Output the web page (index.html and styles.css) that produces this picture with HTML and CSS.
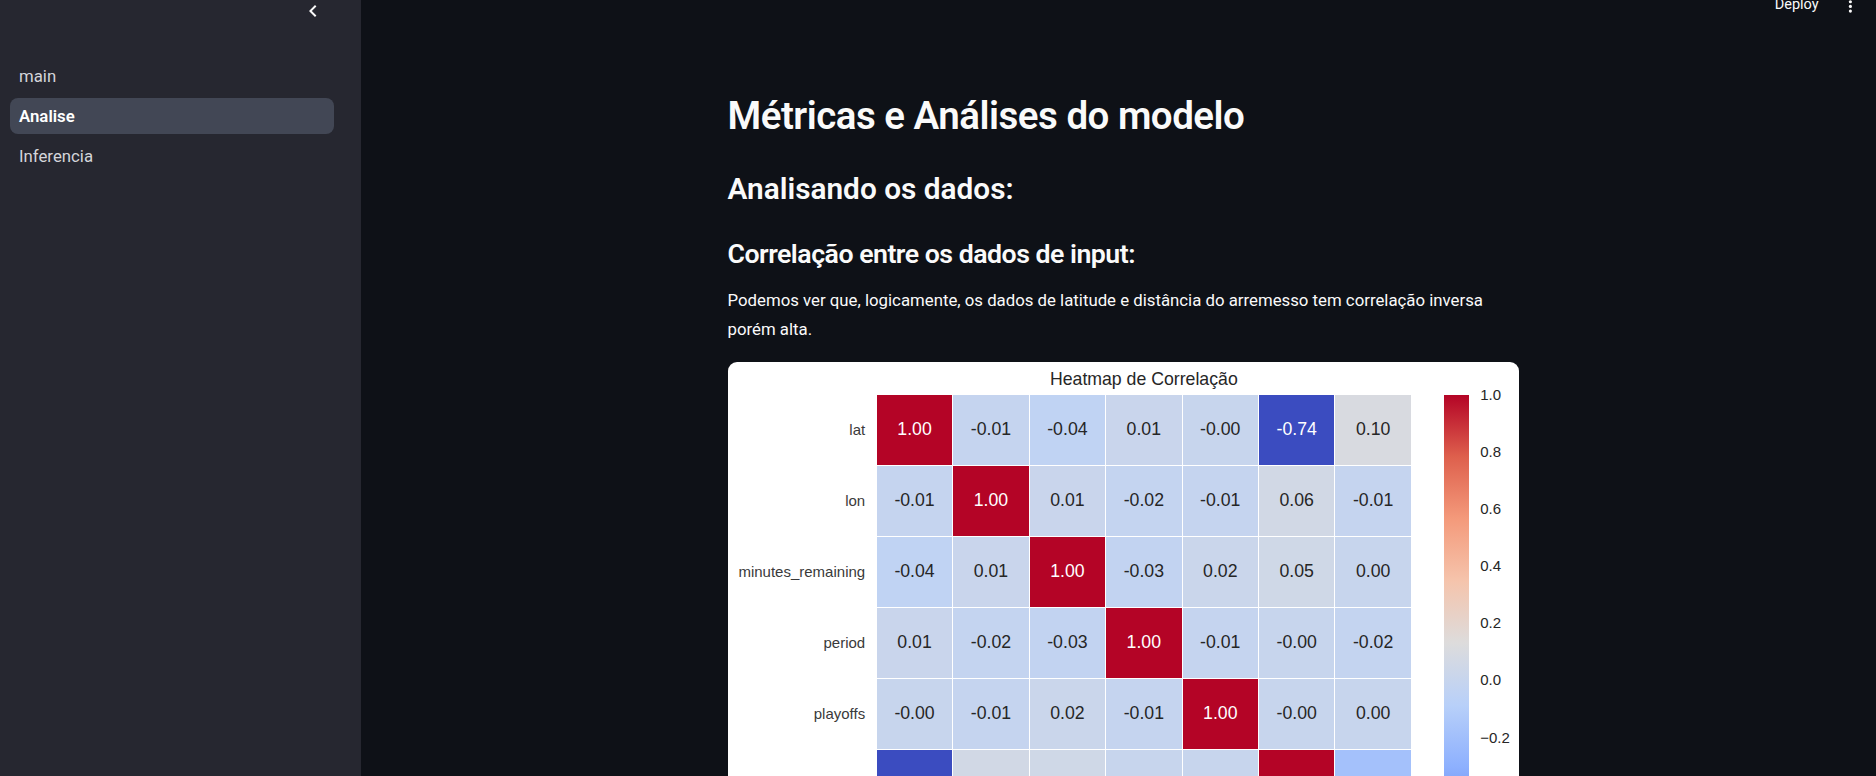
FILE: index.html
```html
<!DOCTYPE html>
<html lang="pt">
<head>
<meta charset="utf-8">
<title>Analise</title>
<link rel="stylesheet" href="styles.css">
</head>
<body>
<div class="app">
  <aside class="sidebar">
    <div class="sb-top">
      <svg class="chev" viewBox="0 0 24 24" width="24" height="24"><path d="M15.41 7.41 14 6l-6 6 6 6 1.41-1.41L10.83 12z"/></svg>
    </div>
    <nav class="nav">
      <a class="nav-item">main</a>
      <a class="nav-item active">Analise</a>
      <a class="nav-item">Inferencia</a>
    </nav>
  </aside>
  <main class="main">
    <header class="topbar">
      <span class="deploy">Deploy</span>
      <svg class="kebab" viewBox="0 0 24 24" width="19" height="19"><circle cx="12" cy="6" r="2"/><circle cx="12" cy="12" r="2"/><circle cx="12" cy="18" r="2"/></svg>
    </header>
    <div class="content">
      <div class="prose">
        <h1 class="h1">Métricas e Análises do modelo</h1>
        <h2 class="h2">Analisando os dados:</h2>
        <h3 class="h3">Correlação entre os dados de input:</h3>
        <p class="para">Podemos ver que, logicamente, os dados de latitude e distância do arremesso tem correlação inversa porém alta.</p>
      </div>
      <figure class="card">
        <div class="chart">
          <div class="chart-title">Heatmap de Correlação</div>
          <div class="ylabels">
            <span class="ylabel">lat</span>
            <span class="ylabel">lon</span>
            <span class="ylabel">minutes_remaining</span>
            <span class="ylabel">period</span>
            <span class="ylabel">playoffs</span>
            <span class="ylabel">shot_distance</span>
            <span class="ylabel">shot_made_flag</span>
          </div>
          <div class="matrix">
            <span class="cell hi" style="background:#b40426">1.00</span>
            <span class="cell" style="background:#c5d4ef">-0.01</span>
            <span class="cell" style="background:#c0d3f3">-0.04</span>
            <span class="cell" style="background:#c9d5ec">0.01</span>
            <span class="cell" style="background:#c7d5ed">-0.00</span>
            <span class="cell hi" style="background:#3b4cc0">-0.74</span>
            <span class="cell" style="background:#d8dae0">0.10</span>

            <span class="cell" style="background:#c5d4ef">-0.01</span>
            <span class="cell hi" style="background:#b40426">1.00</span>
            <span class="cell" style="background:#c9d5ec">0.01</span>
            <span class="cell" style="background:#c4d4f0">-0.02</span>
            <span class="cell" style="background:#c5d4ef">-0.01</span>
            <span class="cell" style="background:#d1d8e5">0.06</span>
            <span class="cell" style="background:#c5d4ef">-0.01</span>

            <span class="cell" style="background:#c0d3f3">-0.04</span>
            <span class="cell" style="background:#c9d5ec">0.01</span>
            <span class="cell hi" style="background:#b40426">1.00</span>
            <span class="cell" style="background:#c2d3f1">-0.03</span>
            <span class="cell" style="background:#cad6eb">0.02</span>
            <span class="cell" style="background:#cfd8e7">0.05</span>
            <span class="cell" style="background:#c7d5ed">0.00</span>

            <span class="cell" style="background:#c9d5ec">0.01</span>
            <span class="cell" style="background:#c4d4f0">-0.02</span>
            <span class="cell" style="background:#c2d3f1">-0.03</span>
            <span class="cell hi" style="background:#b40426">1.00</span>
            <span class="cell" style="background:#c5d4ef">-0.01</span>
            <span class="cell" style="background:#c7d5ed">-0.00</span>
            <span class="cell" style="background:#c4d4f0">-0.02</span>

            <span class="cell" style="background:#c7d5ed">-0.00</span>
            <span class="cell" style="background:#c5d4ef">-0.01</span>
            <span class="cell" style="background:#cad6eb">0.02</span>
            <span class="cell" style="background:#c5d4ef">-0.01</span>
            <span class="cell hi" style="background:#b40426">1.00</span>
            <span class="cell" style="background:#c7d5ed">-0.00</span>
            <span class="cell" style="background:#c7d5ed">0.00</span>

            <span class="cell hi" style="background:#3b4cc0">-0.74</span>
            <span class="cell" style="background:#d1d8e5">0.06</span>
            <span class="cell" style="background:#cfd8e7">0.05</span>
            <span class="cell" style="background:#c7d5ed">-0.00</span>
            <span class="cell" style="background:#c7d5ed">-0.00</span>
            <span class="cell hi" style="background:#b40426">1.00</span>
            <span class="cell" style="background:#a4c1fb">-0.17</span>

            <span class="cell" style="background:#d8dae0">0.10</span>
            <span class="cell" style="background:#c5d4ef">-0.01</span>
            <span class="cell" style="background:#c7d5ed">0.00</span>
            <span class="cell" style="background:#c4d4f0">-0.02</span>
            <span class="cell" style="background:#c7d5ed">0.00</span>
            <span class="cell" style="background:#a4c1fb">-0.17</span>
            <span class="cell hi" style="background:#b40426">1.00</span>
          </div>
          <div class="cbar"></div>
          <div class="cticks">
            <span class="tick" style="top:0px">1.0</span>
            <span class="tick" style="top:57.1px">0.8</span>
            <span class="tick" style="top:114.2px">0.6</span>
            <span class="tick" style="top:171.3px">0.4</span>
            <span class="tick" style="top:228.4px">0.2</span>
            <span class="tick" style="top:285.5px">0.0</span>
            <span class="tick" style="top:342.6px">−0.2</span>
            <span class="tick" style="top:399.7px">−0.4</span>
            <span class="tick" style="top:456.8px">−0.6</span>
          </div>
        </div>
      </figure>
    </div>
  </main>
</div>
</body>
</html>
```

FILE: styles.css
```css
html, body {
  margin: 0;
  padding: 0;
  height: 100%;
}

body {
  background: #0e1117;
  color: #fafafa;
  font-family: Roboto, "Noto Sans", "Liberation Sans", sans-serif;
  overflow: hidden;
}

.app {
  display: flex;
  height: 100vh;
  overflow: hidden;
}

/* Sidebar */
.sidebar {
  width: 361px;
  flex: none;
  background: #262730;
}

.sb-top {
  height: 58px;
  display: flex;
  justify-content: flex-end;
  align-items: flex-start;
  padding-right: 36px;
  box-sizing: border-box;
}

.chev {
  display: block;
  margin-top: -1.5px;
  fill: #fafafa;
}

.nav {
  display: flex;
  flex-direction: column;
  gap: 4px;
  padding: 0 27px 0 10px;
}

.nav-item {
  display: flex;
  align-items: center;
  height: 36px;
  padding-left: 9px;
  border-radius: 8px;
  font-size: 16.8px;
  line-height: 36px;
  color: #d4d5da;
  text-decoration: none;
}

.nav-item.active {
  background: rgba(151, 166, 195, 0.25);
  color: #ffffff;
  font-weight: 600;
}

/* Main */
.main {
  flex: 1;
  min-width: 0;
  overflow: hidden;
  padding-left: 10px;
  display: flex;
  flex-direction: column;
}

.topbar {
  height: 14px;
  display: flex;
  justify-content: flex-end;
  align-items: flex-start;
  gap: 22px;
  padding-right: 16.6px;
  flex: none;
}

.deploy {
  font-size: 14.5px;
  line-height: 17px;
  margin-top: -4px;
  color: #fafafa;
}

.kebab {
  display: block;
  width: 18.8px;
  height: 18.8px;
  margin-top: -3.4px;
  fill: #fafafa;
}

.content {
  width: 797px;
  margin: 0 auto;
  padding-top: 78px;
  flex: none;
}

.prose {
  padding-left: 2.5px;
}

.h1 {
  margin: 0;
  font-size: 38.5px;
  line-height: 47.3px;
  font-weight: 600;
  letter-spacing: -0.5px;
}

.h2 {
  margin: 31.9px 0 0;
  font-size: 29.8px;
  line-height: 35.4px;
  font-weight: 600;
  letter-spacing: 0;
}

.h3 {
  margin: 31.3px 0 0;
  font-size: 26.7px;
  line-height: 32px;
  font-weight: 600;
  letter-spacing: -0.5px;
}

.para {
  margin: 16.1px 0 0;
  max-width: 785px;
  font-size: 16.8px;
  line-height: 29px;
}

/* Chart card */
.card {
  margin: 18px auto 0;
  width: 791.3px;
  background: #ffffff;
  border-radius: 9px;
  padding-bottom: 140px;
  overflow: hidden;
  color: #262626;
  font-family: "Liberation Sans", Arial, sans-serif;
}

.chart {
  display: grid;
  grid-template-columns: 149px 534px 33.3px 25.3px 1fr;
  grid-template-rows: 33px auto;
}

.chart-title {
  grid-column: 2;
  grid-row: 1;
  text-align: center;
  font-size: 17.7px;
  line-height: 20px;
  padding-top: 7.5px;
}

.ylabels {
  grid-column: 1;
  grid-row: 2;
  display: grid;
  grid-auto-rows: 70px;
  row-gap: 1px;
  padding-right: 11.7px;
}

.ylabel {
  display: flex;
  align-items: center;
  justify-content: flex-end;
  font-size: 15px;
  color: #3a3a3a;
}

.matrix {
  grid-column: 2;
  grid-row: 2;
  display: grid;
  grid-template-columns: repeat(7, 1fr);
  grid-auto-rows: 70px;
  gap: 1px;
}

.cell {
  display: flex;
  align-items: center;
  justify-content: center;
  font-size: 17.7px;
  color: #262626;
}

.cell.hi {
  color: #ffffff;
}

.cbar {
  grid-column: 4;
  grid-row: 2;
  height: 496px;
  background: linear-gradient(to bottom,
    #b40426 0%,
    #de604d 12.5%,
    #f49a7b 25%,
    #f5c4ac 37.5%,
    #dddcdc 50%,
    #b8d0f9 62.5%,
    #8db0fe 75%,
    #6282ea 87.5%,
    #3b4cc0 100%);
}

.cticks {
  grid-column: 5;
  grid-row: 2;
  position: relative;
}

.tick {
  position: absolute;
  left: 10.7px;
  transform: translateY(-50%);
  font-size: 15px;
  line-height: 18px;
  color: #262626;
}
```
